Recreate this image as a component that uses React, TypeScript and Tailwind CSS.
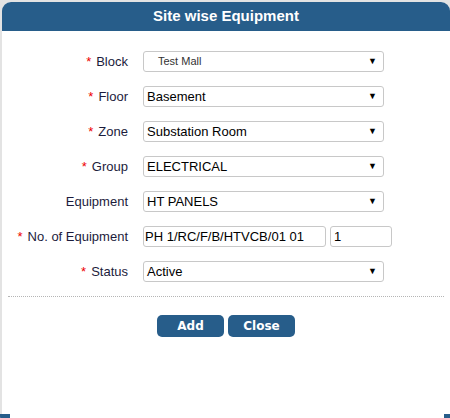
import React from "react"

const rows = [
  { label: "Block", req: true, value: "Test Mall", small: true },
  { label: "Floor", req: true, value: "Basement" },
  { label: "Zone", req: true, value: "Substation Room" },
  { label: "Group", req: true, value: "ELECTRICAL" },
  { label: "Equipment", req: false, value: "HT PANELS" },
]

function Label({ text, req }: { text: string; req: boolean }) {
  return (
    <div className="w-[127px] shrink-0 text-right text-[13px] text-[#1c1c3c] pr-[1px]">
      {req && <span className="text-[#e00] mr-[5px]">*</span>}
      {text}
    </div>
  )
}

function FakeSelect({ value, small }: { value: string; small?: boolean }) {
  return (
    <div className="ml-[14px] w-[241px] h-[21px] border border-[#c8c8c8] rounded-[3px] bg-white flex items-center justify-between pr-[6px]">
      <span className={small ? "pl-[14px] text-[11px] text-[#333]" : "pl-[3px] text-[13px] text-black"}>{value}</span>
      <span className="text-[9px] text-black">▼</span>
    </div>
  )
}

export default function App() {
  return (
    <div className="w-[450px] h-[418px] bg-[#e3e3e3] pt-[2px] overflow-hidden" style={{ fontFamily: '"Liberation Sans", Arial, sans-serif' }}>
      <div className="relative h-[416px] ml-[2px] bg-white rounded-t-[9px]">
        <div className="h-[29px] bg-[#275d8a] rounded-t-[9px] flex items-center justify-center">
          <span className="text-white font-bold text-[15px]">Site wise Equipment</span>
        </div>

        <div className="flex flex-col pt-[20px] gap-[14px]">
          {rows.map((r) => (
            <div key={r.label} className="flex items-center h-[21px]">
              <Label text={r.label} req={r.req} />
              <FakeSelect value={r.value} small={r.small} />
            </div>
          ))}

          <div className="flex items-center h-[21px]">
            <Label text="No. of Equipment" req />
            <div className="ml-[14px] w-[183px] h-[21px] border border-[#c8c8c8] rounded-[3px] flex items-center pl-[1px] text-[13px] text-black">
              PH 1/RC/F/B/HTVCB/01 01
            </div>
            <div className="ml-[4px] w-[62px] h-[21px] border border-[#c8c8c8] rounded-[3px] flex items-center pl-[3px] text-[13px] text-black">
              1
            </div>
          </div>

          <div className="flex items-center h-[21px]">
            <Label text="Status" req />
            <FakeSelect value="Active" />
          </div>
        </div>

        <div className="mt-[14px] mx-[6px] border-t border-dotted border-[#b5b5b5]" />

        <div className="flex justify-center gap-[4px] mt-[18px]">
          <button className="w-[67px] h-[22px] bg-[#275d8a] rounded-[5px] text-white font-bold text-[12px]" style={{ fontFamily: '"DejaVu Sans", Verdana, sans-serif' }}>
            Add
          </button>
          <button className="w-[67px] h-[22px] bg-[#275d8a] rounded-[5px] text-white font-bold text-[12px]" style={{ fontFamily: '"DejaVu Sans", Verdana, sans-serif' }}>
            Close
          </button>
        </div>

        <div className="absolute left-[-2px] bottom-[-6px] w-[10px] h-[10px] bg-[#275d8a] rounded-bl-[8px]" />
        <div className="absolute right-0 bottom-[-6px] w-[6px] h-[10px] bg-[#275d8a] rounded-br-[8px]" />
      </div>
    </div>
  )
}
